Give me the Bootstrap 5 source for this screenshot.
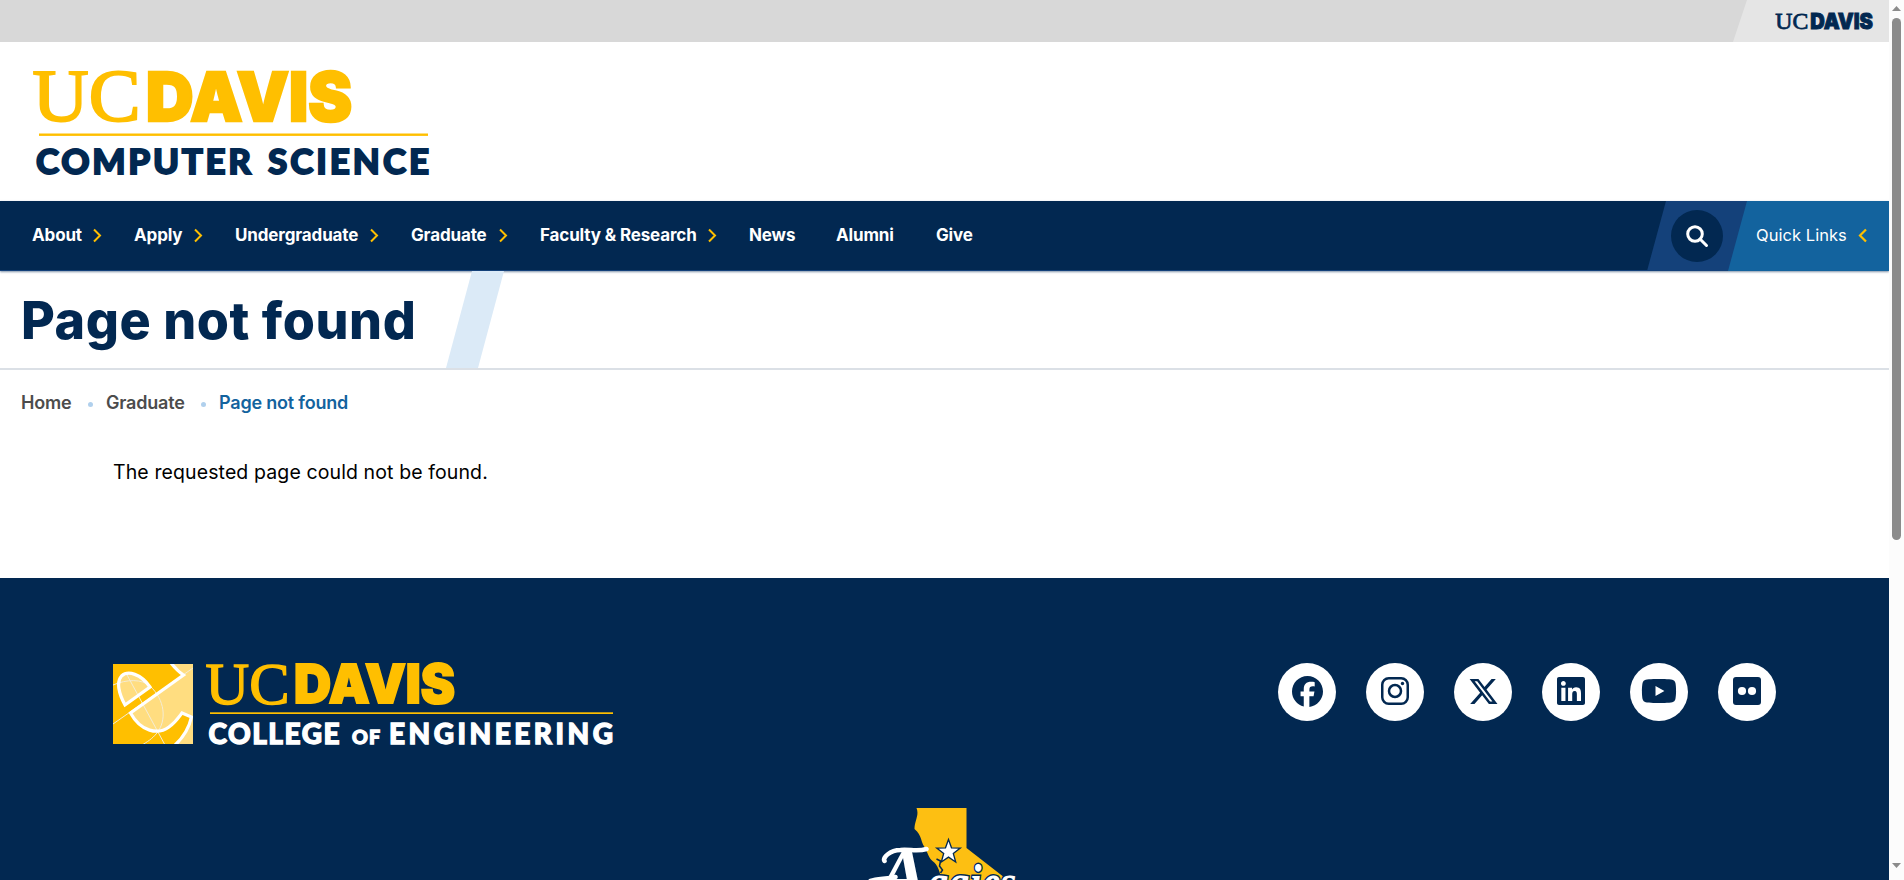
<!DOCTYPE html>
<html lang="en">
<head>
<meta charset="utf-8">
<meta name="viewport" content="width=device-width, initial-scale=1">
<title>Page not found | Computer Science</title>
<link rel="stylesheet" href="https://cdn.jsdelivr.net/npm/bootstrap@5.3.0/dist/css/bootstrap.min.css">
<style>
:root{--navy:#022851;--gold:#ffbf00;--blue:#13639e;--mid:#14417a}
body{font-family:Inter,"Open Sans",sans-serif;color:#000;height:880px}
svg{display:block;overflow:visible}
.serif{font-family:"Liberation Serif",serif}
.heavy{font-family:Inter,sans-serif;font-weight:900}
.geo{font-family:Lato,sans-serif;font-weight:900}
.topbar{height:42px;background:#d8d8d8}
.topbar-home{width:156px;padding-right:16px;background:#e5e5e5;clip-path:polygon(14px 0,100% 0,100% 100%,0 100%)}
.masthead{height:159px;padding:26px 0 0 30px}
.mainnav{height:70px;padding-left:32px;background:var(--navy);box-shadow:inset 0 -1px var(--mid),0 1px 2px rgba(2,40,81,.5)}
.mainnav .nav-link{padding:0 33px 0 0;color:#fff;font-weight:700;font-size:17px;letter-spacing:-.14px;line-height:69px;white-space:nowrap}
.mainnav .nav-item:nth-child(1){width:102px}
.mainnav .nav-item:nth-child(2){width:101px}
.mainnav .nav-item:nth-child(3){width:176px}
.mainnav .nav-item:nth-child(4){width:129px}
.mainnav .nav-item:nth-child(5){width:209px}
.mainnav .nav-item:nth-child(6){width:87px}
.mainnav .nav-item:nth-child(7){width:100px}
.search-slot{width:100px;background:var(--mid);clip-path:polygon(19px 0,100% 0,100% 100%,0 100%)}
.search-btn{width:52px;height:52px;background:var(--navy)}
.quick{width:161px;margin-left:-19px;padding:0 22px 1px 28px;background:var(--blue);color:#fff;font-size:16.5px;letter-spacing:.05px;clip-path:polygon(19px 0,100% 0,100% 100%,0 100%)}
.titlebar{height:99px;padding-left:21px;border-bottom:2px solid #dbe0e6}
.titlebar h1{margin:0;font-size:52px;font-weight:800;letter-spacing:.55px;line-height:99px;color:var(--navy);width:425px;white-space:nowrap}
.slash{width:58px;background:#dbeaf7;clip-path:polygon(26px 0,100% 0,32px 100%,0 100%)}
.crumbs{padding:21px 0 0 21px;font-size:18px;font-weight:600;letter-spacing:-.2px;line-height:24px;color:#4c4c4c}
.dot{width:5px;height:5px;background:#b0d0ed;margin-top:2px}
.message{padding:41px 0 0 113px;font-size:19.5px;letter-spacing:.11px;line-height:32px}
.foot{background:var(--navy);padding:85px 113px 0 113px}
.social{width:58px;height:58px;background:#fff;color:var(--navy)}
.social svg{margin-top:-2px}
.scroller{width:15px;background:#fcfcfc;padding:6px 3px 12px}
.thumb{width:9px;height:522px;border-radius:5px;background:#8b8b8b;margin-top:7px}
</style>
</head>
<body class="d-flex overflow-hidden">
<div class="d-flex flex-column flex-grow-1 overflow-hidden">
  <div class="topbar d-flex justify-content-end flex-shrink-0">
    <a class="topbar-home d-flex justify-content-end align-items-center" href="#" aria-label="UC Davis">
      <svg width="98" height="17" viewBox="0 0 318 53" fill="#022851">
        <text class="serif" x="1" y="51" font-size="76" textLength="107" lengthAdjust="spacingAndGlyphs" stroke="#022851" stroke-width="2.500">UC</text>
        <text class="heavy" x="114" y="51" font-size="69" textLength="204" lengthAdjust="spacingAndGlyphs" stroke="#022851" stroke-width="3">DAVIS</text>
      </svg>
    </a>
  </div>
  <header class="masthead flex-shrink-0">
    <svg width="400" height="110" viewBox="30 68 400 110">
      <g fill="#ffbf00">
        <text class="serif" x="32.500" y="121" font-size="75" textLength="108" lengthAdjust="spacingAndGlyphs" stroke="#ffbf00" stroke-width="2">UC</text>
        <text class="heavy" x="146" y="121" font-size="68" textLength="206" lengthAdjust="spacingAndGlyphs" stroke="#ffbf00" stroke-width="2.500">DAVIS</text>
        <rect x="39" y="133.500" width="389" height="2.400"/>
      </g>
      <g class="geo" fill="#022851" stroke="#022851" stroke-width="1.800" font-size="35">
        <text x="36" y="173.500" textLength="215">COMPUTER</text>
        <text x="268" y="173.500" textLength="161">SCIENCE</text>
      </g>
    </svg>
  </header>
  <nav class="mainnav d-flex flex-shrink-0 position-relative">
    <ul class="nav flex-nowrap flex-grow-1">
      <li class="nav-item"><a class="nav-link d-flex align-items-center justify-content-between" href="#">About <svg width="8" height="13" viewBox="0 0 8 13" fill="none" stroke="#ffbf00" stroke-width="2"><path d="M1 .5l6 6-6 6"/></svg></a></li>
      <li class="nav-item"><a class="nav-link d-flex align-items-center justify-content-between" href="#">Apply <svg width="8" height="13" viewBox="0 0 8 13" fill="none" stroke="#ffbf00" stroke-width="2"><path d="M1 .5l6 6-6 6"/></svg></a></li>
      <li class="nav-item"><a class="nav-link d-flex align-items-center justify-content-between" href="#">Undergraduate <svg width="8" height="13" viewBox="0 0 8 13" fill="none" stroke="#ffbf00" stroke-width="2"><path d="M1 .5l6 6-6 6"/></svg></a></li>
      <li class="nav-item"><a class="nav-link d-flex align-items-center justify-content-between" href="#">Graduate <svg width="8" height="13" viewBox="0 0 8 13" fill="none" stroke="#ffbf00" stroke-width="2"><path d="M1 .5l6 6-6 6"/></svg></a></li>
      <li class="nav-item"><a class="nav-link d-flex align-items-center justify-content-between" href="#">Faculty &amp; Research <svg width="8" height="13" viewBox="0 0 8 13" fill="none" stroke="#ffbf00" stroke-width="2"><path d="M1 .5l6 6-6 6"/></svg></a></li>
      <li class="nav-item"><a class="nav-link" href="#">News</a></li>
      <li class="nav-item"><a class="nav-link" href="#">Alumni</a></li>
      <li class="nav-item"><a class="nav-link" href="#">Give</a></li>
    </ul>
    <div class="search-slot d-flex justify-content-center align-items-center">
      <button class="search-btn btn border-0 rounded-circle p-0 d-flex justify-content-center align-items-center" aria-label="Search">
        <svg width="22" height="22" viewBox="0 0 22 22" fill="none" stroke="#fff" stroke-width="3"><circle cx="9" cy="9" r="7.300"/><path d="M14 14l6.500 6.500" stroke-linecap="round"/></svg>
      </button>
    </div>
    <a class="quick d-flex align-items-center justify-content-between text-decoration-none" href="#"><span>Quick Links</span> <svg width="8" height="13" viewBox="0 0 8 13" fill="none" stroke="#ffbf00" stroke-width="2.200"><path d="M7 .5l-6 6 6 6"/></svg></a>
  </nav>
  <div class="titlebar d-flex flex-shrink-0">
    <h1>Page not found</h1>
    <div class="slash"></div>
  </div>
  <div class="crumbs d-flex align-items-center">
    <span style="width:67px">Home</span><span class="dot rounded-circle"></span>
    <span style="width:95px;margin-left:13px">Graduate</span><span class="dot rounded-circle"></span>
    <span style="margin-left:13px;color:#13639e">Page not found</span>
  </div>
  <main class="message flex-grow-1">The requested page could not be found.</main>
  <footer class="foot flex-shrink-0" style="height:302px">
    <div class="d-flex justify-content-between align-items-start">
      <svg width="502" height="84" viewBox="113 663 502 84">
        <svg x="113" y="664" width="80" height="80" viewBox="0 0 80 80" style="overflow:hidden">
          <rect width="80" height="80" fill="#ffbf00"/>
          <path fill="#ffdd80" d="M60 0L72 11 18 50C28 68 45 72 56 64 63 59 66 53 69 49L78 53C76 64 70 74 62 82H80V0zM12 41C6 30 3 18 9 12 15 5 28 10 37 23z"/>
          <g fill="none" stroke="#f4ecd4" stroke-width="1"><path d="M0 60L80 4M13 9L52 81M0 21C14 15 29 15 37 22 52 36 54 56 44 69 39 75 34 78 29 81"/></g>
          <path fill="none" stroke="#fff" stroke-width="3.200" d="M58-1C62 4 66 8 70.500 11L17.500 49C28 68 45 71 56 63 63 58 66 53 69 49L78.500 53C76 64 70 74 61 82M12 41C6 30 3 18 8.500 12 15 6 28 10 37 23z"/>
        </svg>
        <g fill="#ffbf00">
          <text class="serif" x="205.500" y="703.500" font-size="59" textLength="84" lengthAdjust="spacingAndGlyphs" stroke="#ffbf00" stroke-width="1.400">UC</text>
          <text class="heavy" x="294" y="703" font-size="53" textLength="161" lengthAdjust="spacingAndGlyphs" stroke="#ffbf00" stroke-width="2">DAVIS</text>
          <rect x="210" y="712.300" width="403" height="1.700"/>
        </g>
        <g class="geo" fill="#fff" stroke="#fff" stroke-width="1.300" font-size="28">
          <text x="208.500" y="744" textLength="131">COLLEGE</text>
          <text x="352" y="744" font-size="19.500" textLength="28">OF</text>
          <text x="389" y="744" textLength="224">ENGINEERING</text>
        </g>
      </svg>
      <div class="d-flex" style="gap:30px">
        <a class="social rounded-circle d-flex justify-content-center align-items-center" href="#" aria-label="Facebook"><svg width="31" height="31" viewBox="0 0 512 512" fill="currentColor"><path d="M512 256C512 114.600 397.400 0 256 0S0 114.600 0 256C0 376 82.700 476.800 194.200 504.500V334.200H141.400V256h52.800V222.300c0-87.100 39.400-127.500 125-127.500c16.200 0 44.200 3.200 55.700 6.400V172c-6-.6-16.500-1-29.600-1c-42 0-58.200 15.900-58.200 57.200V256h83.600l-14.400 78.200H287V510.100C413.800 494.800 512 386.900 512 256z"/></svg></a>
        <a class="social rounded-circle d-flex justify-content-center align-items-center" href="#" aria-label="Instagram"><svg width="28" height="28" viewBox="0 0 28 28" fill="none" stroke="currentColor" stroke-width="2.500"><rect x="1.250" y="1.250" width="25.500" height="25.500" rx="6.500"/><circle cx="14" cy="14" r="6"/><circle cx="21.500" cy="6.500" r="1.700" fill="currentColor" stroke="none"/></svg></a>
        <a class="social rounded-circle d-flex justify-content-center align-items-center" href="#" aria-label="X"><svg width="31" height="31" viewBox="0 0 512 512" fill="currentColor"><path d="M389.200 48h70.600L305.600 224.200 487 464H345L233.700 318.600 106.500 464H35.800L200.700 275.500 26.800 48H172.400L272.900 180.900 389.200 48zM364.400 421.800h39.100L151.100 88h-42L364.400 421.800z"/></svg></a>
        <a class="social rounded-circle d-flex justify-content-center align-items-center" href="#" aria-label="LinkedIn"><svg width="28" height="28" viewBox="0 32 448 448" fill="currentColor"><path d="M416 32H31.900C14.300 32 0 46.500 0 64.300v383.400C0 465.500 14.300 480 31.900 480H416c17.600 0 32-14.500 32-32.300V64.300c0-17.800-14.400-32.300-32-32.300zM135.400 416H69V202.200h66.500V416zm-33.200-243c-21.300 0-38.500-17.300-38.500-38.500S80.900 96 102.200 96c21.200 0 38.500 17.300 38.500 38.500 0 21.300-17.200 38.500-38.500 38.500zm282.100 243h-66.400V312c0-24.800-.5-56.700-34.500-56.700-34.600 0-39.900 27-39.900 54.900V416h-66.400V202.200h63.700v29.200h.9c8.900-16.800 30.600-34.500 62.900-34.500 67.200 0 79.700 44.300 79.700 101.900V416z"/></svg></a>
        <a class="social rounded-circle d-flex justify-content-center align-items-center" href="#" aria-label="YouTube"><svg width="36" height="32" viewBox="0 0 576 512" fill="currentColor"><path d="M549.655 124.083c-6.281-23.650-24.787-42.276-48.284-48.597C458.781 64 288 64 288 64S117.220 64 74.629 75.486c-23.497 6.322-42.003 24.947-48.284 48.597-11.412 42.867-11.412 132.305-11.412 132.305s0 89.438 11.412 132.305c6.281 23.650 24.787 41.500 48.284 47.821C117.220 448 288 448 288 448s170.780 0 213.371-11.486c23.497-6.321 42.003-24.171 48.284-47.821 11.412-42.867 11.412-132.305 11.412-132.305s0-89.438-11.412-132.305zm-317.510 213.508V175.185l142.739 81.205-142.739 81.201z"/></svg></a>
        <a class="social rounded-circle d-flex justify-content-center align-items-center" href="#" aria-label="Flickr"><svg width="28" height="28" viewBox="0 0 28 28"><rect width="28" height="28" rx="3" fill="currentColor"/><circle cx="9" cy="14" r="4.100" fill="#fff"/><circle cx="19" cy="14" r="4.100" fill="#fff"/></svg></a>
      </div>
    </div>
    <div class="d-flex justify-content-center">
      <svg width="160" height="75" viewBox="864.500 805 160 75" style="overflow:hidden;margin-top:58px">
        <path fill="#fdbf12" d="M916 808H966V848L1002 876 1006 884H941C941 876 938 865 932 861 928 858 928 854 924 847 920 842 922 836 914 829 914 821 919 815 916 808z"/>
        <g fill="none" stroke="#022851" stroke-width="1.500"><path d="M936 859l4 2-1 5 3 4-2 3"/></g>
        <path fill="#fff" stroke="#022851" stroke-width="1.300" d="M948 839.500l3 8.300 8.800.3-7 5.400 2.400 8.500-7.200-4.900-7.200 4.900 2.400-8.500-7-5.400 8.800-.3z"/>
        <g class="serif" font-weight="700" font-style="italic" fill="#fff" stroke="#022851" stroke-width="3" paint-order="stroke">
          <text x="877" y="900" font-size="76">A</text>
          <text x="927" y="899" font-size="50" textLength="89" lengthAdjust="spacingAndGlyphs">ggies</text>
        </g>
        <path fill="none" stroke="#fff" stroke-width="4.500" stroke-linecap="round" d="M884 861C882 858 889 850 900 850 909 849 917 852 926 849M870 881C876 879 885 879 895 877"/>
      </svg>
    </div>
  </footer>
</div>
<aside class="scroller d-flex flex-column align-items-center flex-shrink-0" aria-hidden="true">
  <svg width="9" height="5" viewBox="0 0 9 5" fill="#8b8b8b"><path d="M4.500 0L9 5H0z"/></svg>
  <div class="thumb"></div>
  <svg class="mt-auto" width="9" height="5" viewBox="0 0 9 5" fill="#8b8b8b"><path d="M0 0h9L4.500 5z"/></svg>
</aside>
<script src="https://cdn.jsdelivr.net/npm/bootstrap@5.3.0/dist/js/bootstrap.bundle.min.js"></script>
</body>
</html>
